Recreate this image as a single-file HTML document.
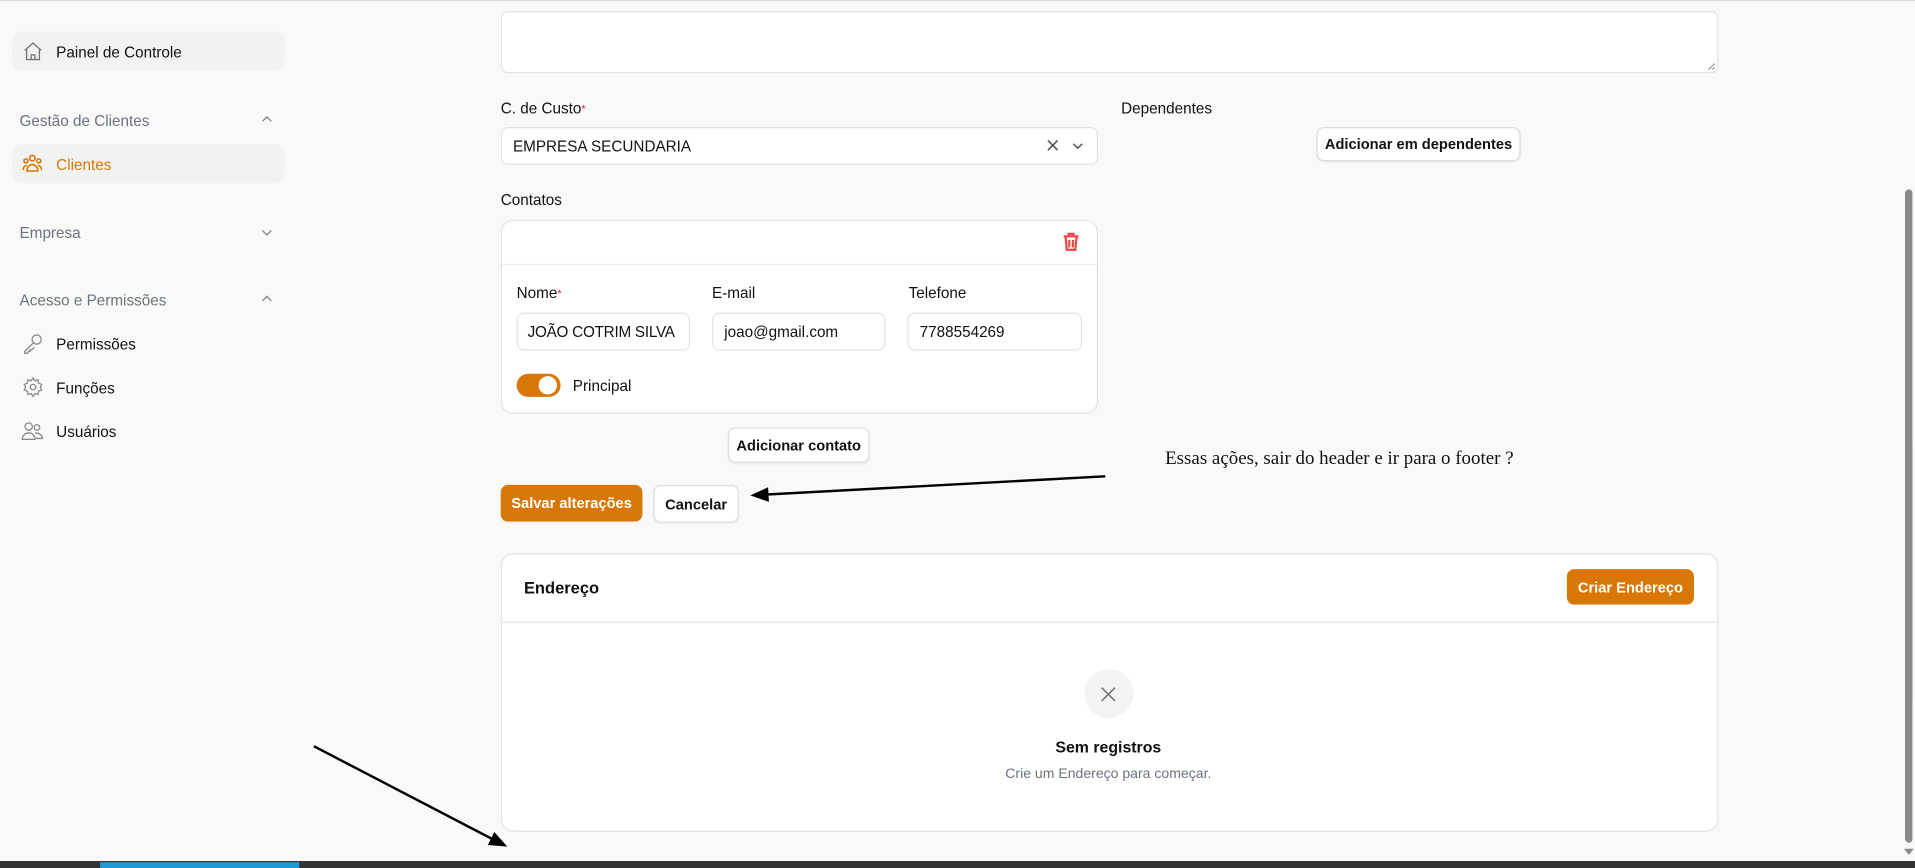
<!DOCTYPE html>
<html><head><meta charset="utf-8"><style>
html,body{margin:0;padding:0;width:1915px;height:868px;overflow:hidden;background:#f9f9f9}
#w{position:absolute;left:0;top:0;width:1568px;height:711px;transform:scale(1.22130);transform-origin:0 0;font-family:"Liberation Sans",sans-serif;font-size:12.5px;color:#111;background:#f9f9f9}
.a{position:absolute}
.t{position:absolute;line-height:16px;white-space:nowrap}
.box{position:absolute;background:#fff;border:1px solid #e3e3e3;border-radius:6px;box-sizing:border-box}
.btn{position:absolute;background:#fff;border:1px solid #ddd;border-radius:6px;box-sizing:border-box;font-weight:bold;font-size:12px;display:flex;align-items:center;justify-content:center;box-shadow:0 1px 1px rgba(0,0,0,.05);white-space:nowrap}
.or{background:#d97706;color:#fff;border-color:#d97706}
.g{color:#6b7280}
.st{color:#e11d48;font-size:9px;vertical-align:top}
</style></head><body><div id="w">
<div class="a" style="left:0;top:0;width:1568px;height:1px;background:#ddd"></div>
<div class="a" style="left:10px;top:26px;width:223px;height:32px;background:#f2f2f2;border-radius:8px"></div>
<svg class="a" style="left:18px;top:33px" width="18" height="18" viewBox="0 0 24 24" fill="none" stroke="#777" stroke-width="1.5"><path d="M3 11l9-8 9 8M5 9.5V21h14V9.5M10 21v-5h4v5"/></svg>
<div class="t" style="left:46px;top:35px">Painel de Controle</div>
<div class="t g" style="left:16px;top:91px">Gestão de Clientes</div>
<svg class="a" style="left:213px;top:92px" width="11" height="11" viewBox="0 0 12 12" fill="none" stroke="#888" stroke-width="1.2"><path d="M2 8l4-4 4 4"/></svg>
<div class="a" style="left:10px;top:118px;width:223px;height:32px;background:#f2f2f2;border-radius:8px"></div>
<svg class="a" style="left:17px;top:125px" width="19" height="18" viewBox="0 0 24 24" fill="none" stroke="#d97706" stroke-width="1.7"><circle cx="12" cy="6" r="3"/><circle cx="5" cy="9" r="2.2"/><circle cx="19" cy="9" r="2.2"/><path d="M6 20c0-4 3-7 6-7s6 3 6 7zM2 19c0-3 1.5-5 4-5M22 19c0-3-1.5-5-4-5"/></svg>
<div class="t" style="left:46px;top:127px;color:#d97706">Clientes</div>
<div class="t g" style="left:16px;top:183px">Empresa</div>
<svg class="a" style="left:213px;top:185px" width="11" height="11" viewBox="0 0 12 12" fill="none" stroke="#888" stroke-width="1.2"><path d="M2 4l4 4 4-4"/></svg>
<div class="t g" style="left:16px;top:238px">Acesso e Permissões</div>
<svg class="a" style="left:213px;top:239px" width="11" height="11" viewBox="0 0 12 12" fill="none" stroke="#888" stroke-width="1.2"><path d="M2 8l4-4 4 4"/></svg>
<svg class="a" style="left:18px;top:272px" width="18" height="18" viewBox="0 0 24 24" fill="none" stroke="#888" stroke-width="1.4"><circle cx="16" cy="8" r="5"/><path d="M12.5 11.5L3 21v2h3l1-2h2v-2h2l2.5-2.5"/></svg>
<div class="t" style="left:46px;top:274px">Permissões</div>
<svg class="a" style="left:18px;top:308px" width="18" height="18" viewBox="0 0 24 24" fill="none" stroke="#888" stroke-width="1.4"><circle cx="12" cy="12" r="3"/><path d="M12 2l2 3 3.5-1 .5 3.5 3.5 1.5-1.5 3 1.5 3-3.5 1.5-.5 3.5-3.5-1-2 3-2-3-3.5 1-.5-3.5L2.5 15 4 12 2.5 9 6 7.5 6.5 4 10 5z"/></svg>
<div class="t" style="left:46px;top:310px">Funções</div>
<svg class="a" style="left:17px;top:344px" width="19" height="18" viewBox="0 0 24 24" fill="none" stroke="#888" stroke-width="1.4"><circle cx="8" cy="7" r="4"/><circle cx="17" cy="8" r="3"/><path d="M1 21c0-4 3-7 7-7s7 3 7 7zM15 14c4 0 8 2 8 6h-7"/></svg>
<div class="t" style="left:46px;top:346px">Usuários</div>
<div class="box" style="left:410px;top:9px;width:997px;height:51px"></div>
<svg class="a" style="left:1398px;top:51px" width="7" height="7" viewBox="0 0 7 7" stroke="#999"><path d="M1 6L6 1M4 6L6 4"/></svg>
<div class="t" style="left:410px;top:81px">C. de Custo<span class="st">*</span></div>
<div class="box" style="left:410px;top:104px;width:489px;height:31px"></div>
<div class="t" style="left:420px;top:112px">EMPRESA SECUNDARIA</div>
<svg class="a" style="left:856px;top:113px" width="12" height="12" viewBox="0 0 12 12" stroke="#555" stroke-width="1.3"><path d="M2 2l8 8M10 2l-8 8"/></svg>
<svg class="a" style="left:877px;top:114px" width="11" height="11" viewBox="0 0 12 12" fill="none" stroke="#555" stroke-width="1.3"><path d="M2 4l4 4 4-4"/></svg>
<div class="t" style="left:918px;top:81px">Dependentes</div>
<div class="btn" style="left:1078px;top:104px;width:167px;height:28px">Adicionar em dependentes</div>
<div class="t" style="left:410px;top:156px">Contatos</div>
<div class="box" style="left:410px;top:180px;width:489px;height:159px;border-radius:10px"></div>
<div class="a" style="left:411px;top:216px;width:487px;height:1px;background:#ececec"></div>
<svg class="a" style="left:870px;top:190px" width="14" height="16" viewBox="0 0 14 16" fill="none" stroke="#ef4444" stroke-width="1.8"><path d="M1 3.5h12M5 3V1.5h4V3M2.5 4l1 10.5h7l1-10.5M5.5 6.5v6M8.5 6.5v6"/></svg>
<div class="t" style="left:423px;top:232px">Nome<span class="st">*</span></div>
<div class="t" style="left:583px;top:232px">E-mail</div>
<div class="t" style="left:744px;top:232px">Telefone</div>
<div class="box" style="left:423px;top:256px;width:142px;height:31px"></div>
<div class="t" style="left:432px;top:264px;letter-spacing:-0.2px">JOÃO COTRIM SILVA</div>
<div class="box" style="left:583px;top:256px;width:142px;height:31px"></div>
<div class="t" style="left:593px;top:264px">joao@gmail.com</div>
<div class="box" style="left:743px;top:256px;width:143px;height:31px"></div>
<div class="t" style="left:753px;top:264px">7788554269</div>
<div class="a" style="left:423px;top:306px;width:36px;height:19px;background:#d97706;border-radius:10px"></div>
<div class="a" style="left:441px;top:308px;width:15px;height:15px;background:#fff;border-radius:50%"></div>
<div class="t" style="left:469px;top:308px">Principal</div>
<div class="btn" style="left:596px;top:350px;width:116px;height:29px">Adicionar contato</div>
<div class="btn or" style="left:410px;top:397px;width:116px;height:30px">Salvar alterações</div>
<div class="btn" style="left:535px;top:397px;width:70px;height:31px">Cancelar</div>
<div class="t" style="left:954px;top:368px;font-family:'Liberation Serif',serif;font-size:15.5px">Essas ações, sair do header e ir para o footer ?</div>
<svg class="a" style="left:0;top:0" width="1568" height="711"><g stroke="#000" stroke-width="2" fill="#000"><line x1="905" y1="390" x2="626" y2="405"/><path d="M617 405.5l11-5 .5 9z"/><line x1="257" y1="611" x2="405" y2="688"/><path d="M413 692l-12-1 4-8z"/></g></svg>
<div class="box" style="left:410px;top:453px;width:997px;height:228px;border-radius:10px"></div>
<div class="a" style="left:411px;top:509px;width:995px;height:1px;background:#e3e3e3"></div>
<div class="t" style="left:429px;top:474px;font-size:13.5px;font-weight:bold">Endereço</div>
<div class="btn or" style="left:1283px;top:466px;width:104px;height:29px">Criar Endereço</div>
<div class="a" style="left:888px;top:548px;width:40px;height:40px;background:#f3f3f3;border-radius:50%"></div>
<svg class="a" style="left:901px;top:562px" width="13" height="13" viewBox="0 0 12 12" stroke="#777" stroke-width="1.2"><path d="M1 1l10 10M11 1L1 11"/></svg>
<div class="t" style="left:0;width:1815px;top:604px;text-align:center;font-weight:bold;font-size:13px">Sem registros</div>
<div class="t g" style="left:0;width:1815px;top:626px;text-align:center;font-size:11.5px">Crie um Endereço para começar.</div>
<div class="a" style="left:1560px;top:155px;width:6px;height:535px;background:#8a8a8a;border-radius:3px"></div>
<div class="a" style="left:1559px;top:695px;width:0;height:0;border-left:4px solid transparent;border-right:4px solid transparent;border-top:5px solid #888"></div>
<div class="a" style="left:0;top:705px;width:1568px;height:6px;background:#333"></div>
<div class="a" style="left:82px;top:706px;width:163px;height:5px;background:#1e9bd7"></div>
</div></body></html>
